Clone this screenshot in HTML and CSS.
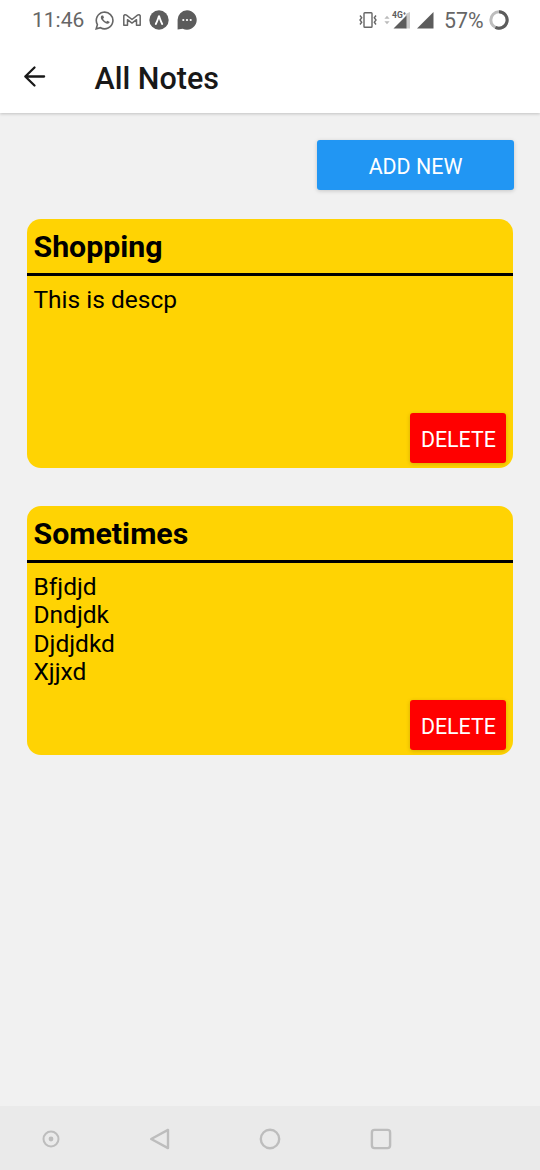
FILE: index.html
```html
<!DOCTYPE html>
<html lang="en">
<head>
<meta charset="utf-8">
<meta name="viewport" content="width=device-width">
<title>All Notes</title>
<link rel="stylesheet" href="styles.css">
</head>
<body>
<div class="screen">
  <div class="status">
    <span class="time">11:46</span>
    <div class="notifications">
      <svg width="20" height="20" viewBox="0 0 20 20" fill="none" stroke="#666" stroke-width="1.6"><path d="M1.2 18.8 2.4 14.6A8.3 8.3 0 1 1 5.5 17.7Z"/><path d="M6.7 5.4c-1.4 1-1.1 3.200.6 5.100 2 2.500 5 4.100 6.600 2.800l.9-1.200-2.400-1.400-1.100 1.100C9.800 11.200 8.600 10 8.100 8.700l.9-1.100-.9-2.200Z" fill="#666" stroke="none"/></svg>
      <svg width="18" height="20" viewBox="0 0 18 20" fill="none" stroke="#666" stroke-width="1.5" stroke-linejoin="round"><path d="M.8 15.300V5.600Q2 4 3.500 5.200L9 9.500l5.500-4.300Q16 4 17.200 5.600v9.700h-3.700V9.700L9 13.100 4.500 9.700v5.600Z"/></svg>
      <svg width="20" height="20" viewBox="0 0 20 20"><circle cx="10" cy="10" r="9.700" fill="#5c5c5c"/><path d="M6.800 14C8 12 9 8.800 10 6.200c1 2.600 2 5.800 3.200 7.800" fill="none" stroke="#fff" stroke-width="1.900" stroke-linecap="round" stroke-linejoin="round"/></svg>
      <svg width="20" height="20" viewBox="0 0 20 20"><path d="M10 .3a9.700 9.700 0 1 1-4.300 18.400L.6 19.400V10A9.500 9.500 0 0 1 10 .3Z" fill="#5c5c5c"/><g fill="#fff"><circle cx="6.300" cy="10" r="1.100"/><circle cx="10" cy="10" r="1.100"/><circle cx="13.700" cy="10" r="1.100"/></g></svg>
    </div>
    <div class="system">
      <svg width="18" height="20" viewBox="0 0 18 20" fill="none" stroke="#666" stroke-width="1.400"><rect x="5" y="2.700" width="8" height="14.600" rx=".8"/><path d="m1 5.500 1.700 2.300L1 10l1.700 2.200L1 14.500M17 5.500l-1.700 2.300L17 10l-1.700 2.200 1.700 2.300"/></svg>
      <svg class="data" width="6" height="20" viewBox="0 0 6 20" fill="#bbb"><path d="m3 5.800 2.600 3H.4ZM3 14.200l2.600-3H.4Z"/></svg>
      <svg class="mobile" width="19" height="20" viewBox="0 0 19 20"><path d="M13.500 4 18 2v16.500h-4.500Z" fill="#ccc"/><path d="m1.500 18.500 13-13v13Z" fill="#5c5c5c"/><text x="0" y="7.600" class="network">4G⁺</text></svg>
      <svg class="signal" width="18" height="20" viewBox="0 0 18 20"><path d="M1 18.500 17.500 2v16.500Z" fill="#5c5c5c"/></svg>
      <span class="percent">57%</span>
      <svg width="20" height="20" viewBox="0 0 20 20" fill="none" stroke-width="3"><circle cx="10" cy="10" r="8.200" stroke="#bdbdbd"/><path d="M10 1.800a8.200 8.200 0 1 1-3.600 15.600" stroke="#5c5c5c"/></svg>
    </div>
  </div>
  <header class="header">
    <svg class="back" width="24" height="24" viewBox="0 0 24 24" fill="none" stroke="#181818" stroke-width="2.400" stroke-linecap="round" stroke-linejoin="round"><path d="M22 12H2.500M12 2.600 2.400 12l9.600 9.400"/></svg>
    <h1>All Notes</h1>
  </header>
  <main class="content">
    <button class="button add">ADD NEW</button>
    <article class="note">
      <h2>Shopping</h2>
      <p>This is descp</p>
      <button class="button delete">DELETE</button>
    </article>
    <article class="note">
      <h2>Sometimes</h2>
      <p>Bfjdjd<br>Dndjdk<br>Djdjdkd<br>Xjjxd</p>
      <button class="button delete">DELETE</button>
    </article>
  </main>
  <nav class="navigation">
    <svg width="24" height="24" viewBox="0 0 24 24" fill="none" stroke="#bdbdbd" stroke-width="2"><circle cx="12" cy="12" r="7.500"/><circle cx="12" cy="12" r="2.400" fill="#bdbdbd" stroke="none"/></svg>
    <svg width="24" height="24" viewBox="0 0 24 24" fill="none" stroke="#bdbdbd" stroke-width="2.400" stroke-linejoin="round"><path d="M20 2.900v18.200L3.200 12Z"/></svg>
    <svg width="24" height="24" viewBox="0 0 24 24" fill="none" stroke="#bdbdbd" stroke-width="2.400"><circle cx="12" cy="12" r="9.200"/></svg>
    <svg width="24" height="24" viewBox="0 0 24 24" fill="none" stroke="#bdbdbd" stroke-width="2.400"><rect x="2.900" y="2.900" width="18.200" height="18.200" rx="2.500"/></svg>
  </nav>
</div>
</body>
</html>
```
FILE: styles.css
```css
* { box-sizing: border-box; }
body { margin: 0; font-family: Roboto, sans-serif; color: #000; }
h1, h2, p { margin: 0; }
svg { display: block; flex: none; }
.screen { width: 540px; height: 1170px; display: flex; flex-direction: column; background: #f1f1f1; }
.status { position: relative; z-index: 1; height: 40px; padding: 1px 31px 0 32px; display: flex; align-items: center; background: #fff; color: #666; font-size: 21px; line-height: 39px; }
.time { width: 63px; }
.notifications, .system { display: flex; align-items: center; margin-top: -1px; }
.notifications { gap: 8px; }
.system { margin-left: auto; }
.data { margin-left: 7px; }
.mobile { margin-left: 2px; overflow: visible; }
.network { font: bold 8.5px Roboto, sans-serif; fill: #5c5c5c; stroke: #fff; stroke-width: 1px; paint-order: stroke; }
.signal { margin-left: 5px; }
.percent { width: 45px; margin: 1px 0 0 10px; font-size: 21.3px; }
.header { height: 73px; padding-left: 23px; display: flex; align-items: center; background: #fff; box-shadow: 0 1px 3px rgba(0, 0, 0, .2); }
.back { width: 23px; height: 23px; }
h1 { margin: 4px 0 0 48.5px; font-size: 30.5px; font-weight: 500; line-height: 36px; color: #181818; }
.content { flex: 1; padding: 27px 27px 0; display: flex; flex-direction: column; }
.button { height: 50px; padding: 3px 0 0; border: 0; border-radius: 3px; color: #fff; font: 21.4px/47px Roboto, sans-serif; box-shadow: 0 1px 4px rgba(0, 0, 0, .18); }
.add { align-self: flex-end; width: 197px; margin: 0 -1px 28.5px 0; background: #2196f3; }
.note { height: 249.5px; margin-bottom: 37.5px; display: flex; flex-direction: column; border-radius: 14px; background: #ffd303; }
h2 { height: 57px; padding: 0 6.5px; border-bottom: 3px solid #000; font-size: 30.3px; font-weight: 700; line-height: 56px; }
p { padding: 10px 6.5px; font-size: 24.5px; line-height: 28.6px; }
.delete { align-self: flex-end; width: 96px; margin: auto 6.6px 5px 0; background: #f00; }
.navigation { height: 64px; padding: 1px 0 0 39px; display: grid; grid-template-columns: 109px 110px 111px 24px; align-items: center; background: #eaeaea; }
```
